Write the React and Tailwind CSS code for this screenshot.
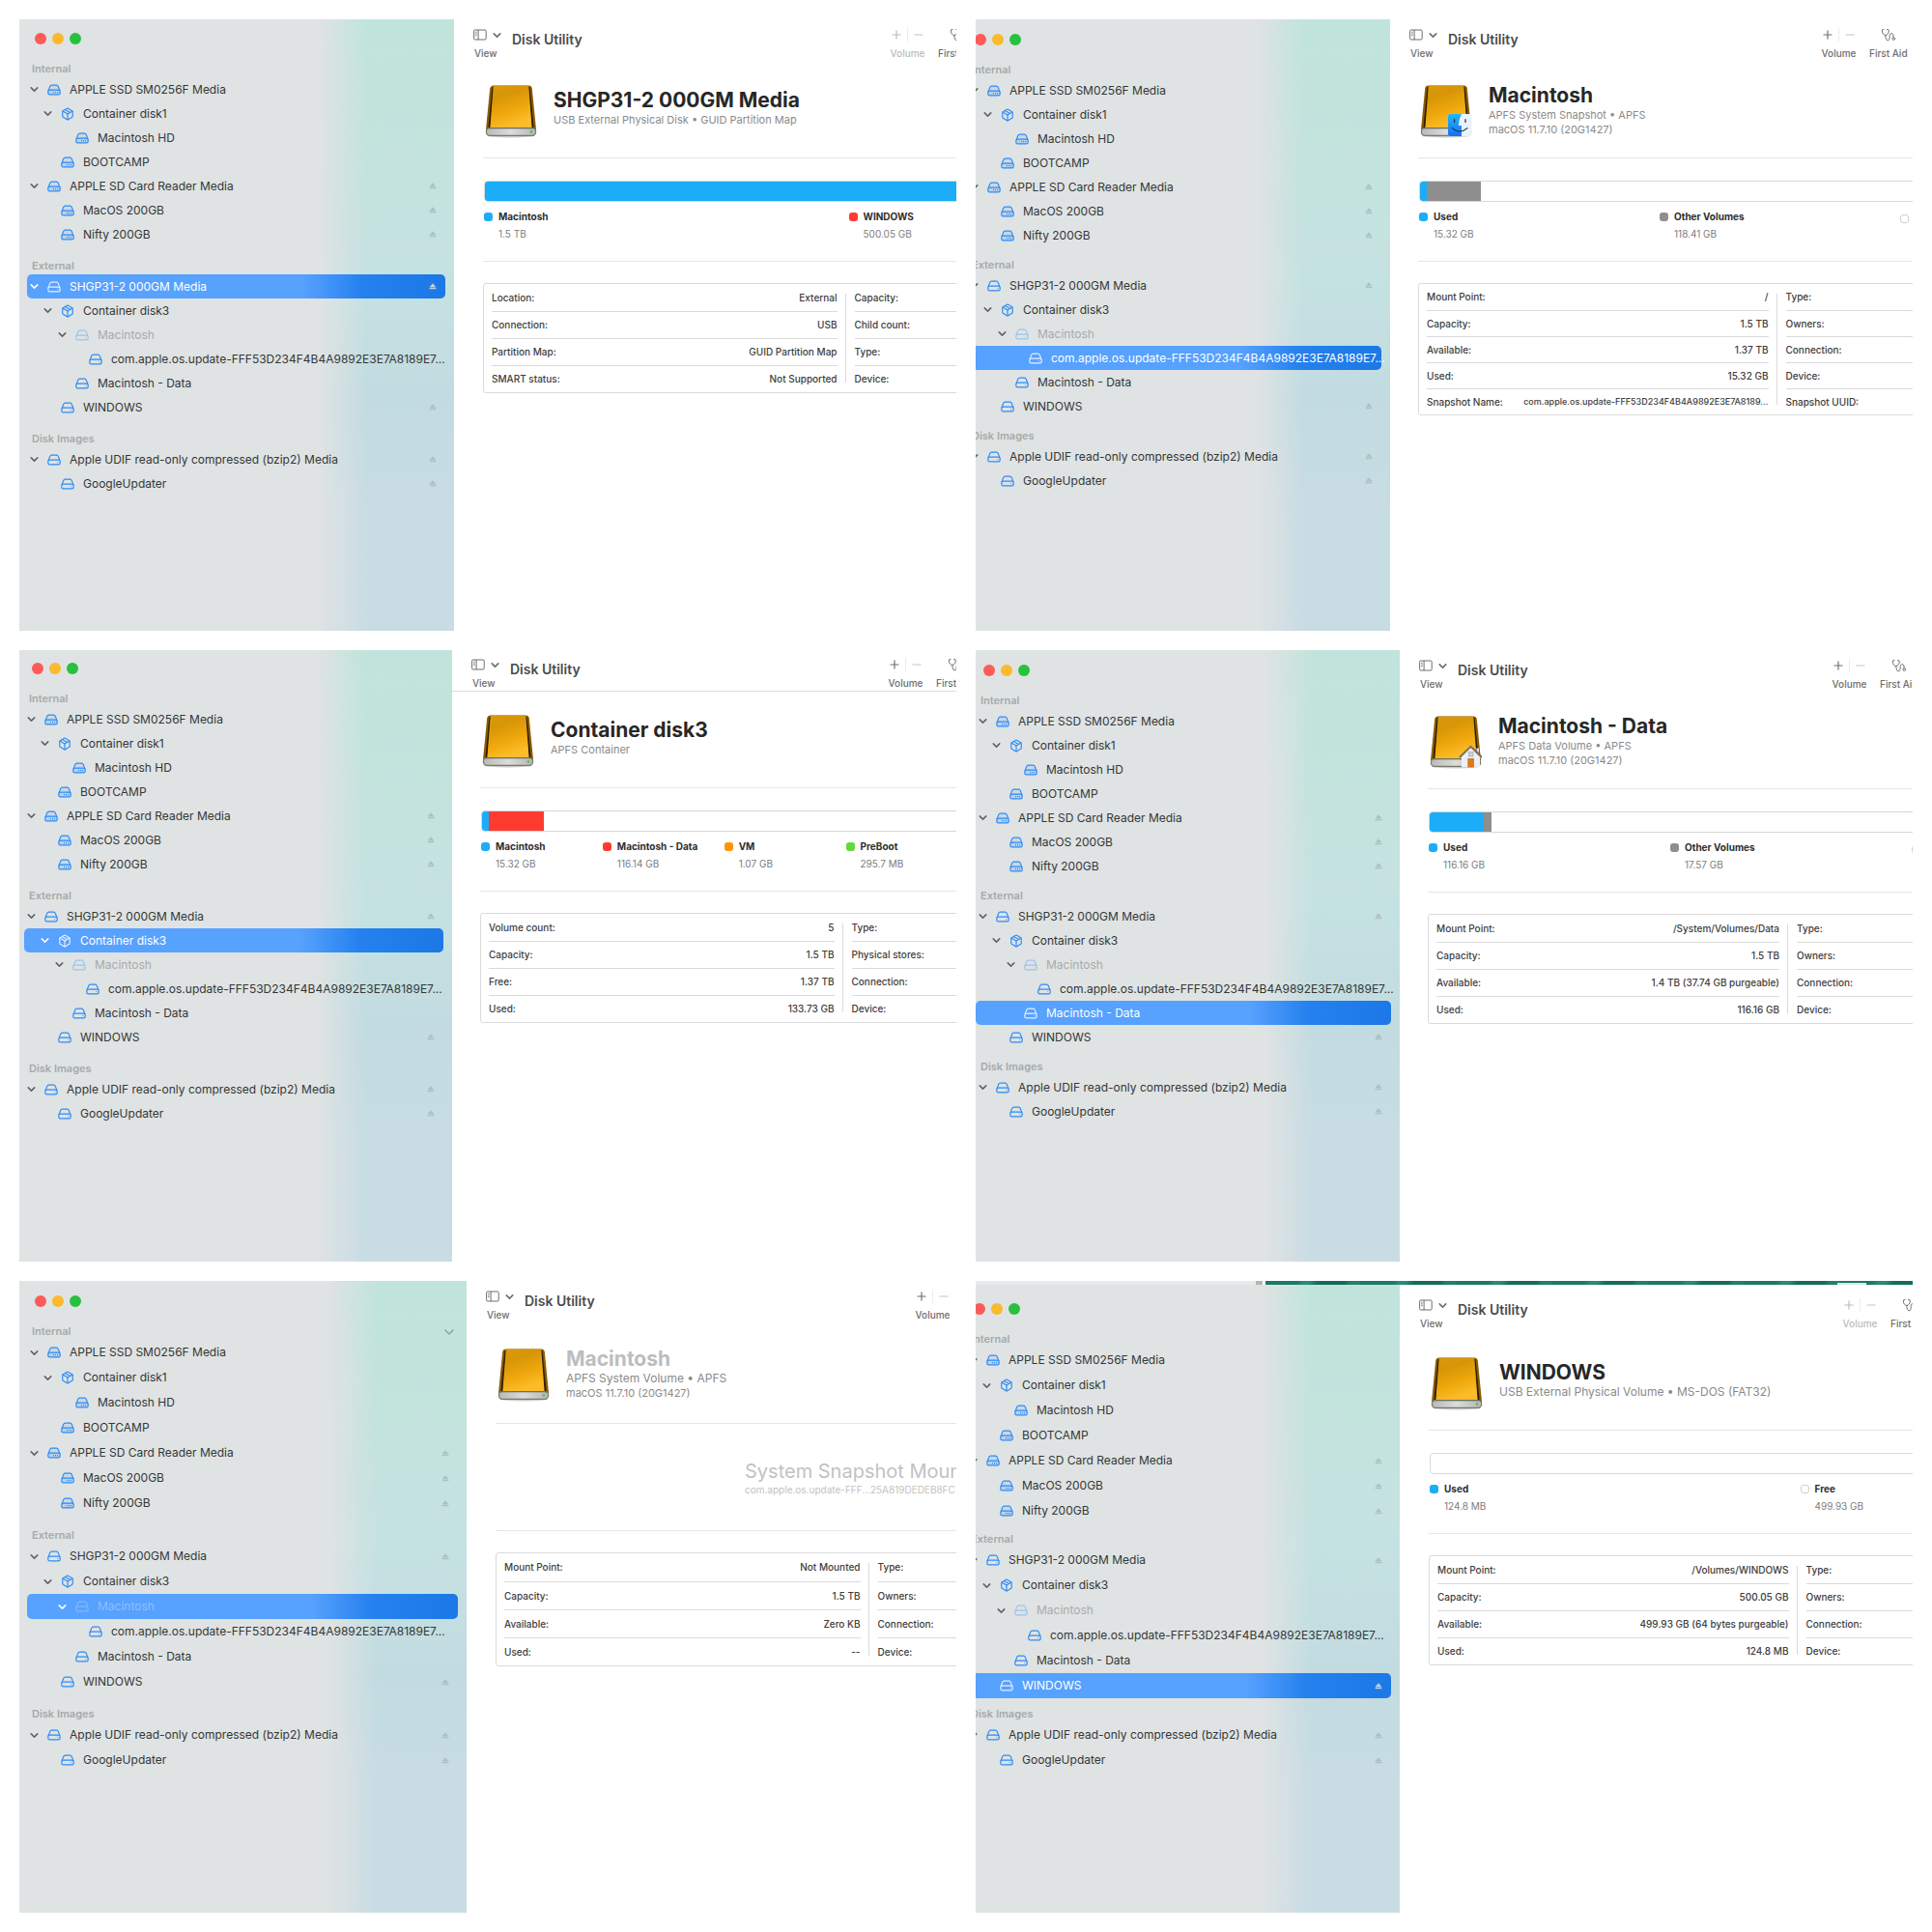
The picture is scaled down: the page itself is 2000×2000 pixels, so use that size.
import { ChevronDown, Minus, Package, Plus } from 'lucide-react'
import clsx from 'clsx'

const DEVICES = [
  {
    title: 'Internal',
    rows: [
      { id: 'ssd', label: 'APPLE SSD SM0256F Media', level: 0, icon: 'internal', open: true },
      { id: 'disk1', label: 'Container disk1', level: 1, icon: 'box', open: true },
      { id: 'hd', label: 'Macintosh HD', level: 2, icon: 'internal' },
      { id: 'bootcamp', label: 'BOOTCAMP', level: 1, icon: 'internal' },
      { id: 'sd', label: 'APPLE SD Card Reader Media', level: 0, icon: 'internal', open: true, eject: true },
      { id: 'macos200', label: 'MacOS 200GB', level: 1, icon: 'internal', eject: true },
      { id: 'nifty200', label: 'Nifty 200GB', level: 1, icon: 'internal', eject: true },
    ],
  },
  {
    title: 'External',
    rows: [
      { id: 'shgp', label: 'SHGP31-2 000GM Media', level: 0, icon: 'external', open: true, eject: true },
      { id: 'disk3', label: 'Container disk3', level: 1, icon: 'box', open: true },
      { id: 'macintosh', label: 'Macintosh', level: 2, icon: 'external', open: true, dimmed: true },
      { id: 'snapshot', label: 'com.apple.os.update-FFF53D234F4B4A9892E3E7A8189E7...', level: 3, icon: 'external' },
      { id: 'data', label: 'Macintosh - Data', level: 2, icon: 'external' },
      { id: 'windows', label: 'WINDOWS', level: 1, icon: 'external', eject: true },
    ],
  },
  {
    title: 'Disk Images',
    rows: [
      { id: 'udif', label: 'Apple UDIF read-only compressed (bzip2) Media', level: 0, icon: 'external', open: true, eject: true },
      { id: 'updater', label: 'GoogleUpdater', level: 1, icon: 'external', eject: true },
    ],
  },
]

const INDENT = ['pl-px', 'pl-[15px]', 'pl-[30px]', 'pl-[44px]']

const WINDOWS = [
  {
    selected: 'shgp',
    sidebar: 'w-[450px]',
    shift: 'ml-0',
    listPad: 'pt-0',
    rowHeight: 'h-[25px]',
    sectionGap: 'mt-3',
    mainPad: 'pt-0',
    lead: 'w-[431px]',
    content: 'ml-[30px] w-[756px] pt-6',
    headHeight: 'h-[76px]',
    detailRow: 'h-7',
    subtitleSize: 'text-[11px]',
    name: 'SHGP31-2 000GM Media',
    subtitle: 'USB External Physical Disk • GUID Partition Map',
    volumeDisabled: true,
    segments: [{ color: 'bg-[#1badf8]', size: 75 }, { color: 'bg-[#ff3b30]', size: 25 }],
    legendCols: 'grid-cols-2',
    legend: [
      { color: 'bg-[#1badf8]', label: 'Macintosh', value: '1.5 TB' },
      { color: 'bg-[#ff3b30]', label: 'WINDOWS', value: '500.05 GB' },
    ],
    left: [['Location:', 'External'], ['Connection:', 'USB'], ['Partition Map:', 'GUID Partition Map'], ['SMART status:', 'Not Supported']],
    right: ['Capacity:', 'Child count:', 'Type:', 'Device:'],
  },
  {
    selected: 'snapshot',
    sidebar: 'w-[429px]',
    shift: '-ml-[17px]',
    listPad: 'pt-px',
    rowHeight: 'h-[25px]',
    sectionGap: 'mt-2.5',
    mainPad: 'pt-0',
    lead: 'w-[426px]',
    content: 'ml-[29px] w-[748px] pt-6',
    headHeight: 'h-[76px]',
    detailRow: 'h-[27px]',
    subtitleSize: 'text-[11px]',
    name: 'Macintosh',
    subtitle: 'APFS System Snapshot • APFS',
    os: 'macOS 11.7.10 (20G1427)',
    badge: 'finder',
    segments: [{ color: 'bg-[#1badf8]', size: 1.05 }, { color: 'bg-[#8e8e8e]', size: 7.6 }],
    legendCols: 'grid-cols-3',
    legend: [
      { color: 'bg-[#1badf8]', label: 'Used', value: '15.32 GB' },
      { color: 'bg-[#8e8e8e]', label: 'Other Volumes', value: '118.41 GB' },
      { color: 'border border-[#cfcfcf] bg-white' },
    ],
    left: [
      ['Mount Point:', '/'],
      ['Capacity:', '1.5 TB'],
      ['Available:', '1.37 TB'],
      ['Used:', '15.32 GB'],
      ['Snapshot Name:', 'com.apple.os.update-FFF53D234F4B4A9892E3E7A8189...'],
    ],
    right: ['Type:', 'Owners:', 'Connection:', 'Device:', 'Snapshot UUID:'],
  },
  {
    selected: 'disk3',
    sidebar: 'w-[448px]',
    shift: '-ml-[3px]',
    listPad: '-mt-px',
    rowHeight: 'h-[25px]',
    sectionGap: 'mt-3',
    mainPad: '-mt-px',
    lead: 'w-[431px]',
    content: 'ml-[29px] w-[756px] pt-6',
    headHeight: 'h-[76px]',
    detailRow: 'h-7',
    subtitleSize: 'text-[11px]',
    toolbarLine: true,
    name: 'Container disk3',
    subtitle: 'APFS Container',
    segments: [{ color: 'bg-[#1badf8]', size: 1.05 }, { color: 'bg-[#ff3b30]', size: 7.6 }],
    legendCols: 'grid-cols-6',
    legend: [
      { color: 'bg-[#1badf8]', label: 'Macintosh', value: '15.32 GB' },
      { color: 'bg-[#ff3b30]', label: 'Macintosh - Data', value: '116.14 GB' },
      { color: 'bg-[#ff9500]', label: 'VM', value: '1.07 GB' },
      { color: 'bg-[#63da38]', label: 'PreBoot', value: '295.7 MB' },
    ],
    left: [['Volume count:', '5'], ['Capacity:', '1.5 TB'], ['Free:', '1.37 TB'], ['Used:', '133.73 GB']],
    right: ['Type:', 'Physical stores:', 'Connection:', 'Device:'],
  },
  {
    selected: 'data',
    sidebar: 'w-[439px]',
    shift: '-ml-2',
    listPad: 'pt-px',
    rowHeight: 'h-[25px]',
    sectionGap: 'mt-2.5',
    mainPad: 'pt-0',
    lead: 'w-[427px]',
    content: 'ml-[29px] w-[751px] pt-6',
    headHeight: 'h-[76px]',
    detailRow: 'h-7',
    subtitleSize: 'text-[11px]',
    name: 'Macintosh - Data',
    subtitle: 'APFS Data Volume • APFS',
    os: 'macOS 11.7.10 (20G1427)',
    badge: 'home',
    segments: [{ color: 'bg-[#1badf8]', size: 7.6 }, { color: 'bg-[#8e8e8e]', size: 1.05 }],
    legendCols: 'grid-cols-3',
    legend: [
      { color: 'bg-[#1badf8]', label: 'Used', value: '116.16 GB' },
      { color: 'bg-[#8e8e8e]', label: 'Other Volumes', value: '17.57 GB' },
      { color: 'border border-[#cfcfcf] bg-white' },
    ],
    left: [['Mount Point:', '/System/Volumes/Data'], ['Capacity:', '1.5 TB'], ['Available:', '1.4 TB (37.74 GB purgeable)'], ['Used:', '116.16 GB']],
    right: ['Type:', 'Owners:', 'Connection:', 'Device:'],
  },
  {
    selected: 'macintosh',
    sidebar: 'w-[463px]',
    shift: 'ml-0',
    listPad: 'pt-px',
    rowHeight: 'h-[26px]',
    sectionGap: 'mt-3',
    mainPad: 'pt-0',
    lead: 'w-[444px]',
    content: 'ml-[30px] w-[778px] pt-[26px]',
    headHeight: 'h-[78px]',
    detailRow: 'h-[29px]',
    subtitleSize: 'text-[12px]',
    sectionToggle: true,
    noFirstAid: true,
    name: 'Macintosh',
    subtitle: 'APFS System Volume • APFS',
    os: 'macOS 11.7.10 (20G1427)',
    unmounted: true,
    left: [['Mount Point:', 'Not Mounted'], ['Capacity:', '1.5 TB'], ['Available:', 'Zero KB'], ['Used:', '--']],
    right: ['Type:', 'Owners:', 'Connection:', 'Device:'],
  },
  {
    selected: 'windows',
    sidebar: 'w-[439px]',
    shift: '-ml-[18px]',
    listPad: 'pt-[5px]',
    rowHeight: 'h-[26px]',
    sectionGap: 'mt-2',
    mainPad: 'pt-[5px]',
    lead: 'w-[438px]',
    content: 'ml-[30px] w-[768px] pt-[26px]',
    headHeight: 'h-[76px]',
    detailRow: 'h-7',
    subtitleSize: 'text-[12px]',
    desktopStrip: true,
    name: 'WINDOWS',
    subtitle: 'USB External Physical Volume • MS-DOS (FAT32)',
    volumeDisabled: true,
    segments: [],
    legendCols: 'grid-cols-2',
    legend: [
      { color: 'bg-[#1badf8]', label: 'Used', value: '124.8 MB' },
      { color: 'border border-[#cfcfcf] bg-white', label: 'Free', value: '499.93 GB' },
    ],
    left: [['Mount Point:', '/Volumes/WINDOWS'], ['Capacity:', '500.05 GB'], ['Available:', '499.93 GB (64 bytes purgeable)'], ['Used:', '124.8 MB']],
    right: ['Type:', 'Owners:', 'Connection:', 'Device:'],
  },
]

function DriveIcon({ internal }) {
  return (
    <svg viewBox="0 0 14 12" className="h-3 w-3.5" fill="none" stroke="currentColor" aria-hidden="true">
      <path
        d="M1 7 L2.8 2.3 Q3.2 1.1 4.4 1.1 H9.6 Q10.8 1.1 11.2 2.3 L13 7"
        strokeWidth="1.1"
        fill="currentColor"
        fillOpacity={internal ? 0.12 : 0}
      />
      <rect x="0.8" y="6.2" width="12.4" height="4.7" rx="1.7" strokeWidth="1.2" fill="currentColor" fillOpacity={internal ? 0.2 : 0} />
      {internal ? (
        <path d="M6 8.6 h1 M8 8.6 h1 M10 8.6 h1" strokeWidth="1.1" />
      ) : (
        <path d="M10.3 8.6 h0.9" strokeWidth="0.9" />
      )}
    </svg>
  )
}

function EjectIcon() {
  return (
    <svg viewBox="0 0 8 7" className="h-[7px] w-2" fill="currentColor" aria-hidden="true">
      <path d="M4 0.3 L7.4 4.2 H0.6 Z" />
      <rect x="0.6" y="4.8" width="6.8" height="1.5" rx="0.4" />
    </svg>
  )
}

function SidebarToggleIcon() {
  return (
    <svg viewBox="0 0 14 12" className="h-3 w-3.5" fill="none" stroke="currentColor" aria-hidden="true">
      <rect x="0.6" y="1" width="12.6" height="10" rx="1.2" strokeWidth="1" />
      <path d="M5.1 1 V11" strokeWidth="1" />
      <path d="M2 3.2 h1.7 M2 4.9 h1.7 M2 6.6 h1.7" strokeWidth="0.8" />
    </svg>
  )
}

function FirstAidIcon() {
  return (
    <svg viewBox="0 0 16 14" className="h-3.5 w-4" fill="none" stroke="currentColor" strokeLinecap="round" aria-hidden="true">
      <path d="M3 1.4 Q1.2 1 1.3 3 C1.4 5.4 2.8 7.4 4.8 7.4 C6.8 7.4 8.2 5.4 8.3 3 Q8.4 1 6.6 1.4" />
      <path d="M4.8 7.4 C5 10.6 5.4 12.8 7.2 12.8 C9.2 12.8 9 10.8 9.2 8.6 C9.3 6.8 9.8 5.6 11.2 5.6 C12.6 5.6 13 7 13.2 9.6" />
      <circle cx="13.3" cy="11.1" r="1.3" />
    </svg>
  )
}

function DiskImage({ badge }) {
  return (
    <svg viewBox="0 0 54 56" className="h-14 w-[54px] shrink-0" aria-hidden="true">
      <defs>
        <linearGradient id="gold" x1="0" y1="0" x2="0.35" y2="1">
          <stop offset="0" stopColor="#d99a0c" />
          <stop offset="0.3" stopColor="#d79507" />
          <stop offset="0.7" stopColor="#f0a90d" />
          <stop offset="1" stopColor="#fcbc2a" />
        </linearGradient>
        <linearGradient id="silver" x1="0" y1="0" x2="1" y2="0">
          <stop offset="0" stopColor="#b9b9b7" />
          <stop offset="0.5" stopColor="#dcdcda" />
          <stop offset="1" stopColor="#b4b8b2" />
        </linearGradient>
        <linearGradient id="finderBlue" x1="0" y1="0" x2="0" y2="1">
          <stop offset="0" stopColor="#22b8f7" />
          <stop offset="1" stopColor="#1a6ff0" />
        </linearGradient>
      </defs>
      <ellipse cx="27" cy="52.6" rx="25" ry="1.8" fill="#000" opacity="0.2" />
      <path d="M9 0.6 H45 Q48.4 0.6 48.8 3.6 L53 46 H1 L5.2 3.6 Q5.6 0.6 9 0.6 Z" fill="#8a5c06" />
      <path d="M7.4 2.4 L3.4 45 H5.6 L9 2 Z M46.6 2.4 L50.6 45 H48.4 L45 2 Z" fill="#2c1e06" />
      <path d="M10 0.8 H44 Q45.2 0.8 45.4 2.4 L48.6 44.4 H5.4 L8.6 2.4 Q8.8 0.8 10 0.8 Z" fill="url(#gold)" />
      <rect x="1.4" y="44.6" width="51.2" height="7.8" rx="3.6" fill="url(#silver)" stroke="#77796f" strokeWidth="1.2" />
      <path d="M3 44.6 H51" stroke="#6c705f" strokeWidth="1" />
      <circle cx="48" cy="48.4" r="1.4" fill="#63bb62" />
      {badge === 'finder' && (
        <g>
          <rect x="29" y="30" width="24.5" height="23" rx="2.5" fill="#eaf2fb" />
          <path d="M31 30 H43 C41 34 40 38 40 42 H43 V53 H31 Q29 53 29 51 V32 Q29 30 31 30 Z" fill="url(#finderBlue)" />
          <path d="M35.6 35.5 v3 M47 35.5 v3" stroke="#16324f" strokeWidth="1.2" strokeLinecap="round" />
          <path d="M33.4 44.6 Q41 51.4 49 44.6" fill="none" stroke="#16324f" strokeWidth="1.2" strokeLinecap="round" />
        </g>
      )}
      {badge === 'home' && (
        <g>
          <path d="M33 42 L42.6 33 L52 42 V53 H33 Z" fill="#eef0f4" />
          <path d="M48.4 33.6 h2.6 v5 l-2.6 -2.4 Z" fill="#e9d9cb" />
          <path d="M31 43 L42.5 31.8 L54 43" fill="none" stroke="#7d705c" strokeWidth="2" />
          <rect x="40.4" y="37.4" width="4.6" height="4.6" fill="#c9d3dd" stroke="#98a0a8" strokeWidth="0.6" />
          <rect x="39.8" y="44.4" width="5.8" height="8.6" fill="#e07b16" stroke="#b5640f" strokeWidth="0.6" />
        </g>
      )}
    </svg>
  )
}

function DeviceRow({ row, selected, height }) {
  return (
    <li
      className={clsx(
        'flex items-center rounded-[5px] pr-[9px]',
        height,
        INDENT[row.level],
        selected
          ? 'bg-[linear-gradient(to_right,#57a1ff_66%,#2581ee_80%,#1c78e6_100%)] text-white'
          : 'text-[#343737]',
      )}
    >
      {row.open ? (
        <button type="button" className="w-[13px] shrink-0" aria-label={`Collapse ${row.label}`}>
          <ChevronDown size={13} strokeWidth={2.8} className={selected ? 'text-white' : 'text-[#5f6363]'} />
        </button>
      ) : (
        <span className="w-[13px] shrink-0" />
      )}
      <span
        className={clsx('mr-[9px] ml-[7px] flex w-3.5 shrink-0 justify-center', {
          'text-[#2e8cf7]': !selected && !row.dimmed,
          'text-[#9cc3ee]': !selected && row.dimmed,
          'text-[#e2efff]': selected && !row.dimmed,
          'text-[#7fb8ff]': selected && row.dimmed,
        })}
      >
        {row.icon === 'box' ? <Package size={14} strokeWidth={2} /> : <DriveIcon internal={row.icon === 'internal'} />}
      </span>
      <button
        type="button"
        className={clsx('min-w-0 flex-1 text-left text-[12px] leading-4 whitespace-nowrap', {
          'text-[#a7abac]': row.dimmed && !selected,
          'text-[#8cc0ff]': row.dimmed && selected,
        })}
      >
        {row.label}
      </button>
      {row.eject && (
        <button type="button" aria-label={`Eject ${row.label}`} className={selected ? 'text-[#c4cfdd]' : 'text-[#afbfc1]'}>
          <EjectIcon />
        </button>
      )}
    </li>
  )
}

function Sidebar({ win }) {
  return (
    <aside className={clsx('flex shrink-0 overflow-hidden', win.sidebar)}>
      <div
        className={clsx(
          'min-w-0 flex-1 bg-[linear-gradient(to_right,#dfe3e3_69%,#dfe3e300_80%),linear-gradient(to_bottom,#c0e4db_0%,#c4e3de_25%,#c5e2e2_42%,#c2dbe1_62%,#c8dce4_80%)]',
          win.shift,
          win.listPad,
        )}
      >
        <div className="flex h-[43px] items-start gap-1.5 pt-3.5 pl-4">
          <button type="button" aria-label="Close" className="size-3 rounded-full bg-[#fc5b57]" />
          <button type="button" aria-label="Minimize" className="size-3 rounded-full bg-[#fbb92d]" />
          <button type="button" aria-label="Zoom" className="size-3 rounded-full bg-[#27c13f]" />
        </div>
        {DEVICES.map((section, i) => (
          <section key={section.title} className={i > 0 ? win.sectionGap : undefined}>
            <div className="flex items-center justify-between pr-2.5 pl-[13px]">
              <h2 className="text-[11px] leading-[17px] font-semibold text-[#a5aaab]">{section.title}</h2>
              {win.sectionToggle && i === 0 && (
                <button type="button" aria-label="Hide Internal">
                  <ChevronDown size={16} strokeWidth={2.6} className="text-[#8ba8a3]" />
                </button>
              )}
            </div>
            <ul className="pr-[9px] pl-2">
              {section.rows.map((row) => (
                <DeviceRow key={row.id} row={row} selected={row.id === win.selected} height={win.rowHeight} />
              ))}
            </ul>
          </section>
        ))}
      </div>
    </aside>
  )
}

function Toolbar({ win }) {
  return (
    <header
      className={clsx(
        'flex h-11 border-b pt-[9px] pl-5 whitespace-nowrap',
        win.toolbarLine ? 'border-[#dcdcdc]' : 'border-transparent',
      )}
    >
      <div className={clsx('flex shrink-0 gap-[9px]', win.lead)}>
        <button type="button" className="flex flex-col items-start gap-[5px] text-[#6e6e6e]">
          <span className="flex h-3.5 items-center gap-1">
            <SidebarToggleIcon />
            <ChevronDown size={13} strokeWidth={3} />
          </span>
          <span className="pl-px text-[10px] leading-3.5 font-medium">View</span>
        </button>
        <h1 className="pt-0.5 text-[14px] leading-5 font-semibold text-[#4b4b4b]">Disk Utility</h1>
      </div>
      <div className={clsx('mr-[13px] flex flex-col items-center gap-[5px]', win.volumeDisabled ? 'text-[#bcbcbc]' : 'text-[#6e6e6e]')}>
        <div className="flex h-3.5 items-center gap-1">
          <button type="button" aria-label="Add volume" disabled={win.volumeDisabled}>
            <Plus size={14} strokeWidth={2} />
          </button>
          <span className="h-3.5 w-px bg-[#ececec]" />
          <button type="button" aria-label="Remove volume" disabled>
            <Minus size={14} strokeWidth={2} className="text-[#c4c4c4]" />
          </button>
        </div>
        <span className="text-[10px] leading-3.5 font-medium">Volume</span>
      </div>
      {!win.noFirstAid && (
        <button type="button" className="flex flex-col items-center gap-[5px] text-[#6e6e6e]">
          <FirstAidIcon />
          <span className="text-[10px] leading-3.5 font-medium">First Aid</span>
        </button>
      )}
    </header>
  )
}

function UsageBar({ segments }) {
  return (
    <div className="ml-px flex h-[22px] overflow-hidden rounded-[4px] border border-[#d8d8d8] bg-white">
      {segments.map((seg) => (
        <div key={seg.color} className={clsx('-my-px first:-ml-px', seg.color)} style={{ width: `${seg.size}%` }} />
      ))}
    </div>
  )
}

function Details({ win }) {
  return (
    <div className="mr-1.5 grid grid-cols-[minmax(0,1fr)_1px_minmax(0,1fr)] rounded-[3px] border border-[#dadada] text-[10px] leading-3.5 font-medium text-[#3d3d3d]">
      <table className="mr-2 ml-2 border-collapse">
        <tbody>
          {win.left.map(([label, value]) => (
            <tr key={label} className={clsx('border-b border-[#dadada] last:border-b-0', win.detailRow)}>
              <th scope="row" className="text-left font-medium whitespace-nowrap">{label}</th>
              <td className={clsx('text-right whitespace-nowrap', value.length > 40 && 'text-[9px]')}>{value}</td>
            </tr>
          ))}
        </tbody>
      </table>
      <span className="my-2.5 bg-[#dadada]" />
      <table className="ml-[9px] border-collapse">
        <tbody>
          {win.right.map((label) => (
            <tr key={label} className={clsx('border-b border-[#dadada] last:border-b-0', win.detailRow)}>
              <th scope="row" className="text-left font-medium">{label}</th>
            </tr>
          ))}
        </tbody>
      </table>
    </div>
  )
}

function DiskWindow({ win }) {
  return (
    <article className="flex min-h-[633px] flex-col overflow-hidden">
      {win.desktopStrip && (
        <div className="flex h-1 shrink-0">
          <span className="w-[290px] bg-[#e9ebeb]" />
          <span className="mr-[3px] w-[7px] bg-[#b3b5b5]" />
          <span className="flex flex-1 items-end justify-end bg-[repeating-linear-gradient(115deg,#1c7a68_0_30px,#2b8b78_36px_42px,#176b5d_50px_75px,#257f6d_80px_90px)] pr-12">
            <span className="h-0.5 w-[30px] bg-[#d5ebe5]" />
          </span>
        </div>
      )}
      <div className="flex flex-1">
        <Sidebar win={win} />
        <main className={clsx('min-w-0 flex-1 overflow-hidden bg-white', win.mainPad)}>
          <Toolbar win={win} />
          <div className={win.content}>
            <div className={clsx('flex gap-[17px] border-b border-[#e6e6e6] pl-0.5', win.headHeight)}>
              <DiskImage badge={win.badge} />
              <div className={clsx('whitespace-nowrap text-[#8a8a8a]', win.os ? '-mt-px' : 'pt-1')}>
                <h2 className={clsx('text-[21px] leading-6 font-bold', win.unmounted ? 'text-[#bdbdbd]' : 'text-[#272727]')}>
                  {win.name}
                </h2>
                <p className={clsx('leading-4', win.subtitleSize)}>{win.subtitle}</p>
                {win.os && <p className="text-[11px] leading-3.5">{win.os}</p>}
              </div>
            </div>
            {win.unmounted ? (
              <div className="h-[111px] border-b border-[#e6e6e6] pt-[37px] pl-[258px] whitespace-nowrap text-[#c2c2c2]">
                <p className="text-[20px] leading-6">System Snapshot Mounted</p>
                <p className="text-[10px] leading-3.5">com.apple.os.update-FFF...25A819DEDEB8FC</p>
              </div>
            ) : (
              <div className="h-[107px] border-b border-[#e6e6e6] pt-[23px]">
                <UsageBar segments={win.segments} />
                <dl className={clsx('mt-2 ml-px grid', win.legendCols)}>
                  {win.legend.map((item) => (
                    <div key={item.color} className="grid grid-cols-[9px_1fr] items-center gap-x-1.5 gap-y-1 whitespace-nowrap">
                      <span className={clsx('size-[9px] rounded-[3px]', item.color)} />
                      <dt className="text-[10px] leading-3.5 font-bold text-[#2e2e2e]">{item.label}</dt>
                      <dd className="col-start-2 text-[10px] leading-3.5 text-[#7d7d7d]">{item.value}</dd>
                    </div>
                  ))}
                </dl>
              </div>
            )}
            <div className="mt-[22px]">
              <Details win={win} />
            </div>
          </div>
        </main>
      </div>
    </article>
  )
}

export default function App() {
  return (
    <div className="grid min-h-screen grid-cols-2 grid-rows-[auto_auto_1fr] gap-5 bg-white p-5 font-['Inter',sans-serif]">
      {WINDOWS.map((win) => (
        <DiskWindow key={win.selected} win={win} />
      ))}
    </div>
  )
}
